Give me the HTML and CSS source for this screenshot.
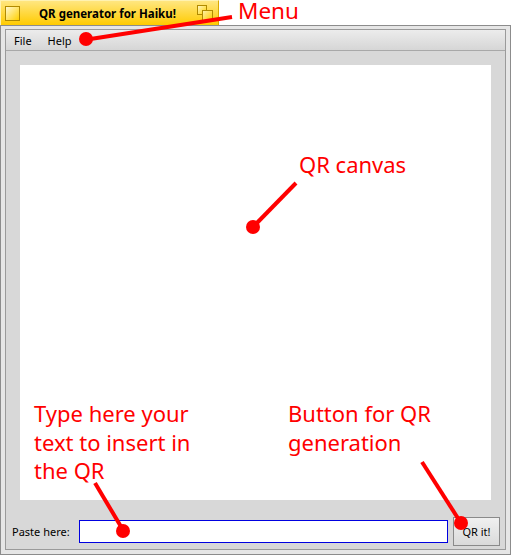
FILE: index.html
```html
<!DOCTYPE html>
<html>
<head>
<meta charset="utf-8">
<link rel="stylesheet" href="styles.css">
</head>
<body>
<div class="screen">
  <div class="tab">
    <span class="close"></span>
    <span class="title">QR generator for Haiku!</span>
    <span class="zoom"><span class="zb"></span><span class="zf"></span></span>
  </div>
  <div class="window">
    <div class="inner">
      <div class="menubar">
        <span class="mi">File</span>
        <span class="mi">Help</span>
      </div>
      <div class="content">
        <div class="canvas"></div>
        <div class="bottom">
          <span class="label">Paste here:</span>
          <div class="input"></div>
          <div class="btn">QR it!</div>
        </div>
      </div>
    </div>
  </div>

  <svg class="marks" width="511" height="555" viewBox="0 0 511 555">
    <g stroke="#ff0000" stroke-width="4" stroke-linecap="butt" fill="none">
      <line x1="84" y1="40" x2="232" y2="17"/>
      <line x1="253" y1="227" x2="296" y2="183"/>
      <line x1="95" y1="483" x2="123" y2="530"/>
      <line x1="422" y1="462" x2="461" y2="523"/>
    </g>
    <g fill="#ff0000">
      <circle cx="86" cy="39" r="7"/>
      <circle cx="253" cy="227" r="7"/>
      <circle cx="123" cy="531" r="7"/>
      <circle cx="461" cy="523" r="7"/>
    </g>
  </svg>
  <div class="note n-menu">Menu</div>
  <div class="note n-canvas">QR canvas</div>
  <div class="note n-type">Type here your<br>text to insert in<br>the QR</div>
  <div class="note n-btn">Button for QR<br>generation</div>
</div>
</body>
</html>
```

FILE: styles.css
```css
html, body {
  margin: 0;
  padding: 0;
  background: #ffffff;
}
body {
  font-family: "Noto Sans", "DejaVu Sans", sans-serif;
}
.screen {
  position: relative;
  width: 511px;
  height: 555px;
  overflow: hidden;
  display: flex;
  flex-direction: column;
}
.tab {
  width: 219px;
  height: 25px;
  box-sizing: border-box;
  border: 1px solid #d9a800;
  border-left-color: #fff2b0;
  border-top-color: #fff2b0;
  border-bottom: none;
  background: linear-gradient(#ffe680, #ffcb00);
  display: flex;
  align-items: center;
  padding: 0 4px 0 4px;
  flex: none;
}
.close {
  width: 15px;
  height: 15px;
  box-sizing: border-box;
  border: 1px solid #b08a00;
  background: linear-gradient(135deg, #fff8d0, #ffd000);
}
.title {
  flex: 1;
  text-align: center;
  font-weight: bold;
  font-size: 11.5px;
  color: #000;
  padding-right: 2px;
}
.zoom {
  position: relative;
  width: 16px;
  height: 16px;
  margin-right: 1px;
}
.zb, .zf {
  position: absolute;
  box-sizing: border-box;
  border: 1px solid #b08a00;
}
.zb {
  left: 0; top: 0;
  width: 10px; height: 10px;
  background: linear-gradient(135deg, #fff5c0, #ffd200);
}
.zf {
  left: 5px; top: 5px;
  width: 11px; height: 11px;
  background: linear-gradient(135deg, #fff0a0, #ffcc00);
}
.window {
  width: 511px;
  height: 530px;
  box-sizing: border-box;
  border: 1px solid #8c8c8c;
  background: #e6e6e6;
  padding: 3px 4px 4px 4px;
  flex: none;
}
.inner {
  height: 100%;
  box-sizing: border-box;
  border: 1px solid #9a9a9a;
  background: #d8d8d8;
  display: flex;
  flex-direction: column;
}
.menubar {
  height: 21px;
  box-sizing: border-box;
  background: linear-gradient(#ececec, #d6d6d6);
  border-bottom: 1px solid #a8a8a8;
  display: flex;
  align-items: center;
  padding-left: 8px;
  gap: 16px;
  font-size: 11px;
  color: #000;
  flex: none;
}
.content {
  flex: 1;
  display: flex;
  flex-direction: column;
  padding: 14px 0 0 0;
}
.canvas {
  height: 435px;
  margin: 0 14px;
  background: #ffffff;
  flex: none;
}
.bottom {
  display: flex;
  align-items: center;
  margin-top: 17px;
  height: 28px;
  padding: 0 6px;
}
.label {
  font-size: 11px;
  color: #000;
  width: 67px;
  flex: none;
}
.input {
  width: 369px;
  height: 23px;
  box-sizing: border-box;
  border: 1px solid #0000e0;
  background: #fff;
  flex: none;
}
.btn {
  margin-left: 5px;
  width: 47px;
  height: 29px;
  box-sizing: border-box;
  border: 1px solid #8a8a8a;
  background: linear-gradient(#f0f0f0, #dadada);
  font-size: 11px;
  display: flex;
  align-items: center;
  justify-content: center;
  color: #000;
  flex: none;
}
.marks {
  position: absolute;
  left: 0;
  top: 0;
}
.note {
  position: absolute;
  color: #ff0000;
  font-size: 22px;
  line-height: 28.5px;
  white-space: nowrap;
}
.n-menu { left: 238px; top: 0; font-size: 22.5px; line-height: 22px; }
.n-canvas { left: 299px; top: 150px; }
.n-type { left: 34px; top: 399px; }
.n-btn { left: 288px; top: 399px; }
```
